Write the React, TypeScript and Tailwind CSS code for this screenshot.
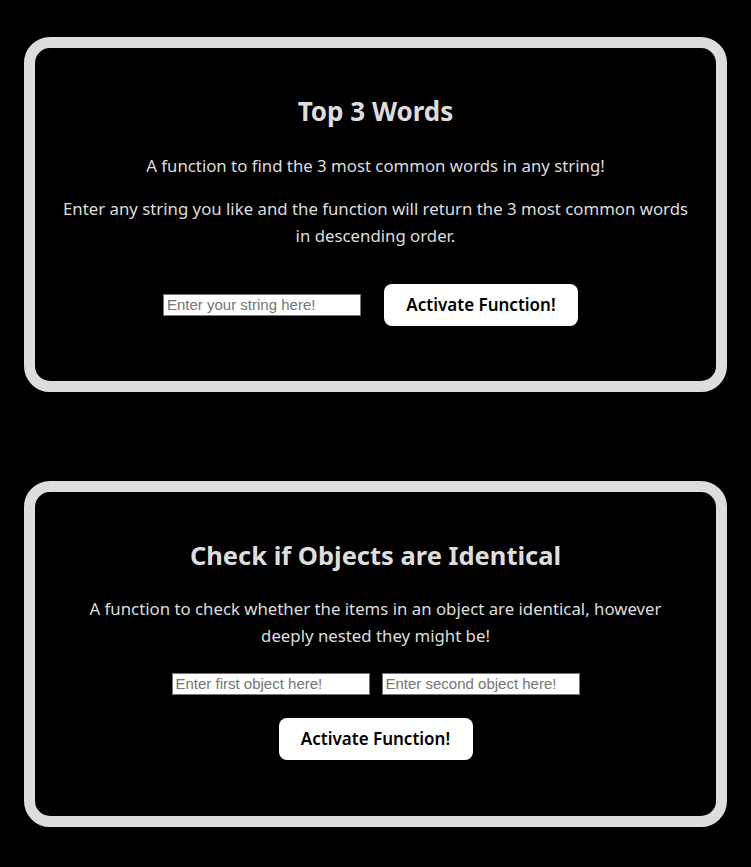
import React from "react";

const Card = ({ children }: { children: React.ReactNode }) => (
  <div className="mx-6 rounded-[26px] border-[11px] border-[#dddddd] bg-black px-6 text-center text-[#dddddd]">
    {children}
  </div>
);

const Input = ({ placeholder }: { placeholder: string }) => (
  <input
    placeholder={placeholder}
    className="h-[22px] w-[198px] border border-[#767676] bg-white px-[3px] text-[15px] text-black placeholder:text-[#757575] [font-family:'Liberation_Sans',Arial,sans-serif]"
  />
);

const Button = () => (
  <button className="h-[42px] w-[194px] rounded-[8px] bg-white text-[17px] font-semibold text-black">
    Activate Function!
  </button>
);

export default function App() {
  return (
    <div className="min-h-[867px] bg-black pt-[37px] pb-[40px] [font-family:'Noto_Sans',sans-serif]">
      <Card>
        <h2 className="mt-[47px] text-[26px] font-bold leading-[32px]">Top 3 Words</h2>
        <p className="mt-[25px] text-[16.8px] leading-[27px]">
          A function to find the 3 most common words in any string!
        </p>
        <p className="mt-[16px] text-[16.8px] leading-[27px]">
          Enter any string you like and the function will return the 3 most common words
          in descending order.
        </p>
        <div className="mt-[35px] mb-[55px] flex items-center justify-center gap-[23px] pr-[10px]">
          <Input placeholder="Enter your string here!" />
          <Button />
        </div>
      </Card>

      <div className="mt-[89px]">
        <Card>
          <h2 className="mt-[47px] text-[25.5px] font-bold leading-[32px]">
            Check if Objects are Identical
          </h2>
          <p className="mx-auto mt-[24px] max-w-[600px] text-[16.8px] leading-[27px]">
            A function to check whether the items in an object are identical, however
            deeply nested they might be!
          </p>
          <div className="mt-[24px] flex items-center justify-center gap-[12px]">
            <Input placeholder="Enter first object here!" />
            <Input placeholder="Enter second object here!" />
          </div>
          <div className="mt-[23px] mb-[56px] flex justify-center">
            <Button />
          </div>
        </Card>
      </div>
    </div>
  );
}
